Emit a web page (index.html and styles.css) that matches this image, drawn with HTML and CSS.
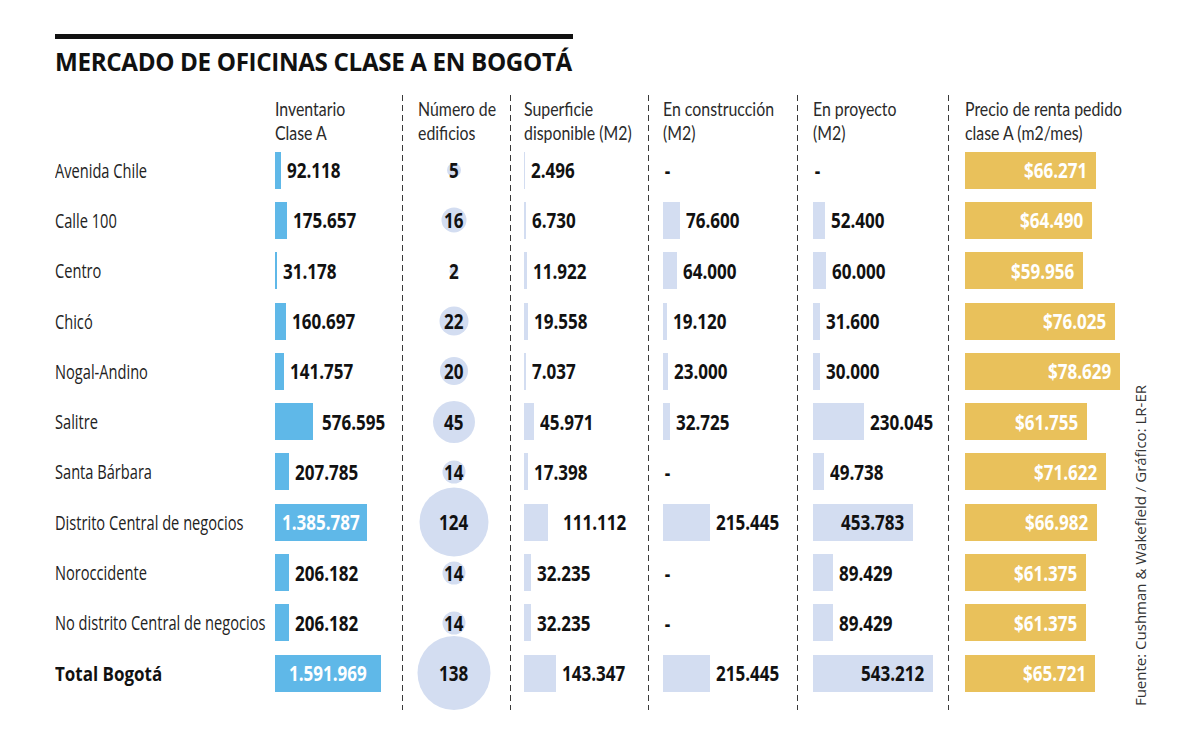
FILE: index.html
```html
<!DOCTYPE html>
<html lang="es">
<head>
<meta charset="utf-8">
<title>Mercado de oficinas clase A en Bogotá</title>
<link rel="stylesheet" href="styles.css">
</head>
<body>
<div class="page">
  <div class="main">
    <div class="rule"></div>
    <h1 class="title">MERCADO DE OFICINAS CLASE A EN BOGOTÁ</h1>
    <div class="table">
      <div class="col col-label">
        <div class="head"></div>
        <div class="cell"><span class="t">Avenida Chile</span></div>
        <div class="cell"><span class="t">Calle 100</span></div>
        <div class="cell"><span class="t">Centro</span></div>
        <div class="cell"><span class="t">Chicó</span></div>
        <div class="cell"><span class="t">Nogal-Andino</span></div>
        <div class="cell"><span class="t">Salitre</span></div>
        <div class="cell"><span class="t">Santa Bárbara</span></div>
        <div class="cell"><span class="t">Distrito Central de negocios</span></div>
        <div class="cell"><span class="t">Noroccidente</span></div>
        <div class="cell"><span class="t">No distrito Central de negocios</span></div>
        <div class="cell total"><span class="t">Total Bogotá</span></div>
      </div>

      <div class="col col-inv">
        <div class="head"><span class="t">Inventario<br>Clase A</span></div>
        <div class="cell"><span class="bar blue" style="width:6px"></span><span class="num">92.118</span></div>
        <div class="cell"><span class="bar blue" style="width:12px"></span><span class="num">175.657</span></div>
        <div class="cell"><span class="bar blue" style="width:2px"></span><span class="num">31.178</span></div>
        <div class="cell"><span class="bar blue" style="width:11px"></span><span class="num">160.697</span></div>
        <div class="cell"><span class="bar blue" style="width:9px"></span><span class="num">141.757</span></div>
        <div class="cell"><span class="bar blue gap9" style="width:38px"></span><span class="num">576.595</span></div>
        <div class="cell"><span class="bar blue" style="width:14px"></span><span class="num">207.785</span></div>
        <div class="cell"><span class="bar blue in" style="width:92px"><span class="num white">1.385.787</span></span></div>
        <div class="cell"><span class="bar blue" style="width:14px"></span><span class="num">206.182</span></div>
        <div class="cell"><span class="bar blue" style="width:14px"></span><span class="num">206.182</span></div>
        <div class="cell"><span class="bar blue in" style="width:106px"><span class="num white">1.591.969</span></span></div>
      </div>

      <div class="col col-n dashed">
        <div class="head"><span class="t">Número de<br>edificios</span></div>
        <div class="cell"><span class="dot" style="width:14px;height:14px"></span><span class="num">5</span></div>
        <div class="cell"><span class="dot" style="width:25px;height:25px"></span><span class="num">16</span></div>
        <div class="cell"><span class="dot" style="width:9px;height:9px"></span><span class="num">2</span></div>
        <div class="cell"><span class="dot" style="width:29px;height:29px"></span><span class="num">22</span></div>
        <div class="cell"><span class="dot" style="width:28px;height:28px"></span><span class="num">20</span></div>
        <div class="cell"><span class="dot" style="width:42px;height:42px"></span><span class="num">45</span></div>
        <div class="cell"><span class="dot" style="width:23px;height:23px"></span><span class="num">14</span></div>
        <div class="cell"><span class="dot" style="width:69px;height:69px"></span><span class="num">124</span></div>
        <div class="cell"><span class="dot" style="width:23px;height:23px"></span><span class="num">14</span></div>
        <div class="cell"><span class="dot" style="width:23px;height:23px"></span><span class="num">14</span></div>
        <div class="cell"><span class="dot" style="width:73px;height:74px"></span><span class="num">138</span></div>
      </div>

      <div class="col col-sup dashed">
        <div class="head"><span class="t">Superficie<br>disponible (M2)</span></div>
        <div class="cell"><span class="bar lav" style="width:1px"></span><span class="num">2.496</span></div>
        <div class="cell"><span class="bar lav" style="width:1.5px"></span><span class="num">6.730</span></div>
        <div class="cell"><span class="bar lav" style="width:3px"></span><span class="num">11.922</span></div>
        <div class="cell"><span class="bar lav" style="width:4px"></span><span class="num">19.558</span></div>
        <div class="cell"><span class="bar lav" style="width:2px"></span><span class="num">7.037</span></div>
        <div class="cell"><span class="bar lav" style="width:10px"></span><span class="num">45.971</span></div>
        <div class="cell"><span class="bar lav" style="width:4px"></span><span class="num">17.398</span></div>
        <div class="cell"><span class="bar lav wide-gap" style="width:24px"></span><span class="num">111.112</span></div>
        <div class="cell"><span class="bar lav" style="width:7px"></span><span class="num">32.235</span></div>
        <div class="cell"><span class="bar lav" style="width:7px"></span><span class="num">32.235</span></div>
        <div class="cell"><span class="bar lav" style="width:32px"></span><span class="num">143.347</span></div>
      </div>

      <div class="col col-con dashed">
        <div class="head"><span class="t">En construcción<br>(M2)</span></div>
        <div class="cell"><span class="num dash">-</span></div>
        <div class="cell"><span class="bar lav" style="width:17px"></span><span class="num">76.600</span></div>
        <div class="cell"><span class="bar lav" style="width:14px"></span><span class="num">64.000</span></div>
        <div class="cell"><span class="bar lav" style="width:4px"></span><span class="num">19.120</span></div>
        <div class="cell"><span class="bar lav" style="width:5px"></span><span class="num">23.000</span></div>
        <div class="cell"><span class="bar lav" style="width:7px"></span><span class="num">32.725</span></div>
        <div class="cell"><span class="num dash">-</span></div>
        <div class="cell"><span class="bar lav" style="width:47px"></span><span class="num">215.445</span></div>
        <div class="cell"><span class="num dash">-</span></div>
        <div class="cell"><span class="num dash">-</span></div>
        <div class="cell"><span class="bar lav" style="width:47px"></span><span class="num">215.445</span></div>
      </div>

      <div class="col col-pro dashed">
        <div class="head"><span class="t">En proyecto<br>(M2)</span></div>
        <div class="cell"><span class="num dash">-</span></div>
        <div class="cell"><span class="bar lav" style="width:12px"></span><span class="num">52.400</span></div>
        <div class="cell"><span class="bar lav" style="width:13px"></span><span class="num">60.000</span></div>
        <div class="cell"><span class="bar lav" style="width:7px"></span><span class="num">31.600</span></div>
        <div class="cell"><span class="bar lav" style="width:7px"></span><span class="num">30.000</span></div>
        <div class="cell"><span class="bar lav" style="width:51px"></span><span class="num">230.045</span></div>
        <div class="cell"><span class="bar lav" style="width:11px"></span><span class="num">49.738</span></div>
        <div class="cell"><span class="bar lav in right" style="width:100px"><span class="num">453.783</span></span></div>
        <div class="cell"><span class="bar lav" style="width:20px"></span><span class="num">89.429</span></div>
        <div class="cell"><span class="bar lav" style="width:20px"></span><span class="num">89.429</span></div>
        <div class="cell"><span class="bar lav in right" style="width:120px"><span class="num">543.212</span></span></div>
      </div>

      <div class="col col-pre dashed">
        <div class="head"><span class="t">Precio de renta pedido<br>clase A (m2/mes)</span></div>
        <div class="cell"><span class="bar gold in right" style="width:131px"><span class="num white">$66.271</span></span></div>
        <div class="cell"><span class="bar gold in right" style="width:127px"><span class="num white">$64.490</span></span></div>
        <div class="cell"><span class="bar gold in right" style="width:118px"><span class="num white">$59.956</span></span></div>
        <div class="cell"><span class="bar gold in right" style="width:150px"><span class="num white">$76.025</span></span></div>
        <div class="cell"><span class="bar gold in right" style="width:155px"><span class="num white">$78.629</span></span></div>
        <div class="cell"><span class="bar gold in right" style="width:122px"><span class="num white">$61.755</span></span></div>
        <div class="cell"><span class="bar gold in right" style="width:141px"><span class="num white">$71.622</span></span></div>
        <div class="cell"><span class="bar gold in right" style="width:132px"><span class="num white">$66.982</span></span></div>
        <div class="cell"><span class="bar gold in right" style="width:121px"><span class="num white">$61.375</span></span></div>
        <div class="cell"><span class="bar gold in right" style="width:121px"><span class="num white">$61.375</span></span></div>
        <div class="cell"><span class="bar gold in right" style="width:130px"><span class="num white">$65.721</span></span></div>
      </div>
    </div>
  </div>
  <div class="source">Fuente: Cushman &amp; Wakefield / Gráfico: LR-ER</div>
</div>
</body>
</html>
```

FILE: styles.css
```css
* { box-sizing: border-box; }
html, body { margin: 0; padding: 0; background: #fff; }
body {
  width: 1200px;
  height: 736px;
  overflow: hidden;
  font-family: "Open Sans", "Liberation Sans", sans-serif;
  color: #1a1a1a;
}
.page {
  display: flex;
  align-items: flex-start;
  padding: 34px 0 0 55px;
}
.main {
  width: 1075px;
  flex: none;
}
.rule {
  width: 518px;
  height: 5px;
  background: #111;
}
.title {
  margin: 8px 0 0 0;
  font-weight: 700;
  font-size: 24.2px;
  line-height: 30px;
  letter-spacing: -0.35px;
  color: #111;
  white-space: nowrap;
}
.table {
  display: flex;
  margin-top: 18px;
}
.col {
  display: flex;
  flex-direction: column;
  padding-bottom: 12px;
  position: relative;
  flex: none;
}
.dashed {
  background-image: repeating-linear-gradient(to bottom, #3a3a3a 0 6px, transparent 6px 10px);
  background-size: 1px 100%;
  background-repeat: no-repeat;
  background-position: left top;
}
.t {
  display: inline-block;
  transform: scaleX(0.75);
  transform-origin: left center;
  white-space: nowrap;
}
.head {
  height: 50px;
  padding-top: 2px;
  font-family: "Lato", "Open Sans", sans-serif;
  font-size: 19.6px;
  line-height: 23.5px;
  color: #2a2a2a;
  white-space: nowrap;
}
.head .t {
  transform: scaleX(0.81);
  transform-origin: left top;
}
.cell {
  height: 50.3px;
  display: flex;
  align-items: center;
  white-space: nowrap;
}
.col-label { width: 220px; }
.col-label .cell { font-size: 19.5px; color: #222; }
.col-label .total { font-weight: 700; color: #111; }
.col-label .total .t { transform: scaleX(0.87); }
.col-inv { width: 127px; }
.col-n { width: 108px; }
.col-n .head { padding-left: 16px; }
.col-sup { width: 138px; padding-left: 14px; }
.col-con { width: 149px; padding-left: 15px; }
.col-pro { width: 151px; padding-left: 16px; }
.col-pre { width: 177px; padding-left: 17px; }

.num {
  display: inline-block;
  font-weight: 700;
  font-size: 20.5px;
  line-height: 24px;
  color: #111;
  transform: scaleX(0.83);
  transform-origin: left center;
}
.num.white { color: #fff; }
.num.dash { padding-left: 2px; }
.bar {
  display: flex;
  align-items: center;
  height: 37px;
  flex: none;
  margin-right: 6px;
}
.bar.in { justify-content: center; margin-right: 0; }
.bar.in .num { transform-origin: center center; }
.bar.in.right { justify-content: flex-end; padding-right: 9px; }
.bar.in.right .num { transform-origin: right center; }
.bar.wide-gap { margin-right: 15px; }
.bar.gap9 { margin-right: 9px; }
.blue { background: #5fb8e8; }
.lav { background: #d3ddf1; }
.gold { background: #e9c15b; }

.col-n .cell {
  justify-content: center;
  position: relative;
  padding-right: 4px;
}
.dot {
  position: absolute;
  left: calc(50% - 2px);
  top: 50%;
  transform: translate(-50%, -50%);
  border-radius: 50%;
  background: #d3ddf1;
}
.col-n .num {
  position: relative;
  transform-origin: center center;
}

.source {
  writing-mode: vertical-rl;
  transform: rotate(180deg);
  margin: 351px 0 0 0;
  font-size: 15px;
  line-height: 20px;
  color: #333;
  white-space: nowrap;
}
```
